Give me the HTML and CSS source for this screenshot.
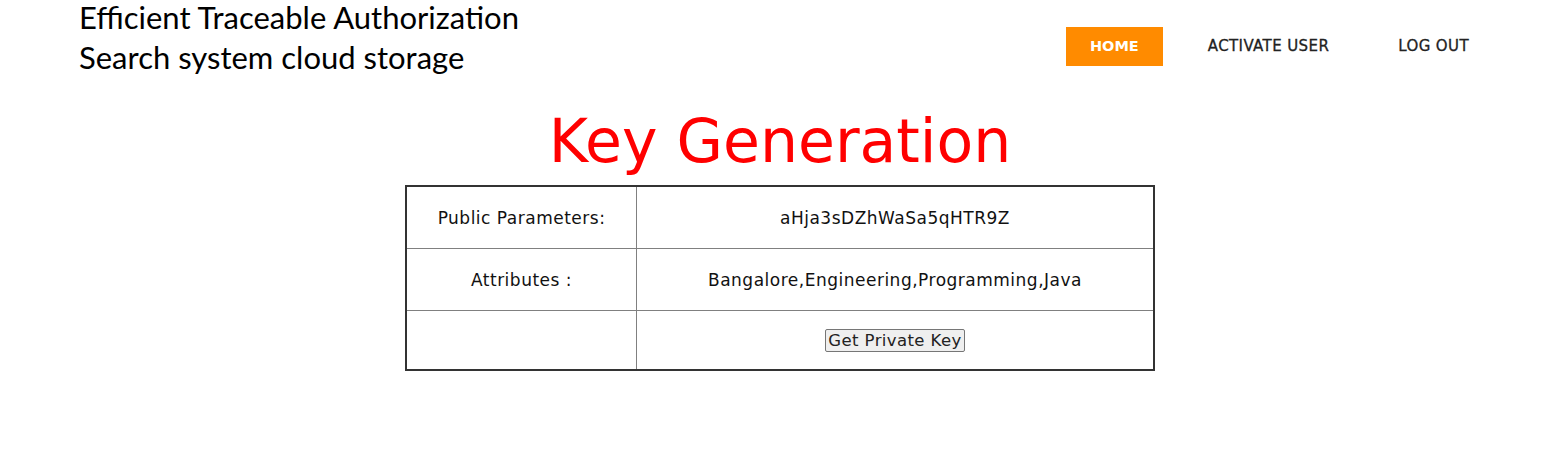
FILE: index.html
```html
<!DOCTYPE html>
<html>
<head>
<meta charset="utf-8">
<link rel="stylesheet" href="styles.css">
<title>Key Generation</title>
</head>
<body>
<header class="header">
  <div class="brand">Efficient Traceable Authorization<br>Search system cloud storage</div>
  <nav class="nav">
    <a class="nav-item active" href="#">HOME</a>
    <a class="nav-item" href="#">ACTIVATE USER</a>
    <a class="nav-item" href="#">LOG OUT</a>
  </nav>
</header>
<main class="main">
  <h1 class="title">Key Generation</h1>
  <table class="keytable">
    <tr>
      <td class="label">Public Parameters:</td>
      <td class="value">aHja3sDZhWaSa5qHTR9Z</td>
    </tr>
    <tr>
      <td class="label">Attributes :</td>
      <td class="value">Bangalore,Engineering,Programming,Java</td>
    </tr>
    <tr class="last">
      <td class="label"></td>
      <td class="value"><button class="btn" type="button">Get Private Key</button></td>
    </tr>
  </table>
</main>
</body>
</html>
```

FILE: styles.css
```css
html, body {
  margin: 0;
  padding: 0;
  background: #ffffff;
}
body {
  font-family: "DejaVu Sans", sans-serif;
  color: #111;
}
.header {
  display: flex;
  justify-content: space-between;
  align-items: flex-start;
  padding: 0 50px 0 79px;
  height: 90px;
}
.brand {
  font-family: "Lato", "Open Sans", sans-serif;
  font-size: 31px;
  line-height: 40px;
  color: #000;
  margin-top: -3px;
}
.nav {
  display: flex;
  gap: 21px;
  margin-top: 27px;
}
.nav-item {
  display: block;
  height: 39px;
  line-height: 39px;
  padding: 0 24px;
  font-size: 15px;
  letter-spacing: 0.4px;
  font-weight: 400;
  color: #222;
  text-decoration: none;
  -webkit-text-stroke: 0.3px #222;
}
.nav-item.active {
  background: #ff8b00;
  color: #fff;
  font-size: 14.5px;
  letter-spacing: 0;
  font-weight: 700;
  -webkit-text-stroke: 0;
}
.main {
  padding-left: 17px;
  display: flex;
  flex-direction: column;
  align-items: center;
}
.title {
  margin: 9px 0 0;
  font-weight: 400;
  font-size: 60px;
  line-height: 84px;
  color: #ff0000;
}
.keytable {
  width: 750px;
  border-collapse: collapse;
  border: 2px solid #333;
  margin-top: 2px;
}
.keytable td {
  border: 1px solid #808080;
  text-align: center;
  font-size: 17px;
  letter-spacing: 0.5px;
  color: #111;
  height: 61px;
  padding: 0;
}
.keytable tr.last td {
  height: 58px;
}
.keytable td.label {
  width: 229px;
}
.btn {
  font-family: "DejaVu Sans", sans-serif;
  font-size: 16.5px;
  letter-spacing: 0.4px;
  color: #222;
  background: #efefef;
  border: 1px solid #767676;
  border-radius: 2px;
  padding: 1px 2px;
  margin-top: 1px;
}
```
